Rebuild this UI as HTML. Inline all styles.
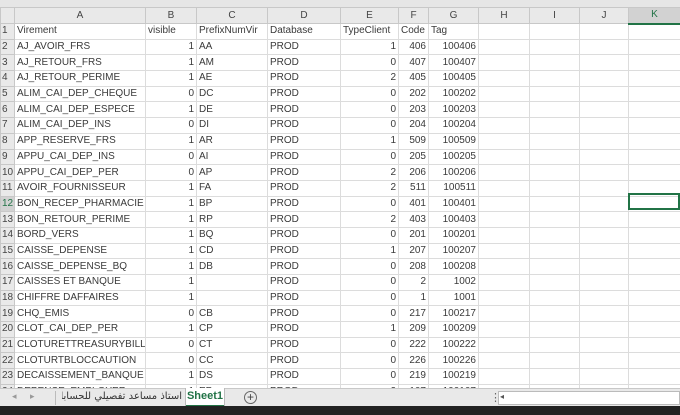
<!DOCTYPE html>
<html><head><meta charset="utf-8"><style>
*{margin:0;padding:0;box-sizing:border-box}
body{width:680px;height:415px;overflow:hidden;background:#fff;font-family:"Liberation Sans",Arial,sans-serif;font-size:10px;color:#3a3a3a;position:relative}
#top{position:absolute;left:0;top:0;width:680px;height:7px;background:#e6e6e6}
table{position:absolute;left:0;top:7px;border-collapse:collapse;table-layout:fixed;width:680px}
td{border:1px solid #dcdcdc;height:15.7px;padding:0 2px;white-space:nowrap;overflow:hidden;line-height:14px}
tr.h td{background:#e9e9e9;height:16px;text-align:center;color:#444;border-color:#c8c8c8}
td.n{background:#e9e9e9;color:#444;text-align:left;padding-left:1px;border-color:#c8c8c8}
td.r{text-align:right}
tr.h td.k{background:#d2d2d2;color:#217346;border-bottom:2px solid #217346}
td.n12{color:#217346;background:#d2d2d2}
#sel{position:absolute;left:628px;top:193px;width:52px;height:17px;border:2px solid #217346}
#tabs{position:absolute;left:0;top:388px;width:680px;height:18px;background:#e9e9e9;border-top:1px solid #c8c8c8;font-size:11px}
#blk{position:absolute;left:0;top:406px;width:680px;height:9px;background:#222}
</style></head><body>
<div id="top"></div>
<table>
<colgroup><col style="width:14px"><col style="width:131px"><col style="width:51px"><col style="width:71px"><col style="width:73px"><col style="width:58px"><col style="width:30px"><col style="width:50px"><col style="width:51px"><col style="width:50px"><col style="width:49px"><col style="width:52px"></colgroup>
<tr class="h"><td></td><td>A</td><td>B</td><td>C</td><td>D</td><td>E</td><td>F</td><td>G</td><td>H</td><td>I</td><td>J</td><td class="k">K</td></tr>
<tr><td class="n">1</td><td>Virement</td><td>visible</td><td>PrefixNumVir</td><td>Database</td><td>TypeClient</td><td>Code</td><td>Tag</td><td></td><td></td><td></td><td></td></tr>
<tr><td class="n">2</td><td>AJ_AVOIR_FRS</td><td class="r">1</td><td>AA</td><td>PROD</td><td class="r">1</td><td class="r">406</td><td class="r">100406</td><td></td><td></td><td></td><td></td></tr>
<tr><td class="n">3</td><td>AJ_RETOUR_FRS</td><td class="r">1</td><td>AM</td><td>PROD</td><td class="r">0</td><td class="r">407</td><td class="r">100407</td><td></td><td></td><td></td><td></td></tr>
<tr><td class="n">4</td><td>AJ_RETOUR_PERIME</td><td class="r">1</td><td>AE</td><td>PROD</td><td class="r">2</td><td class="r">405</td><td class="r">100405</td><td></td><td></td><td></td><td></td></tr>
<tr><td class="n">5</td><td>ALIM_CAI_DEP_CHEQUE</td><td class="r">0</td><td>DC</td><td>PROD</td><td class="r">0</td><td class="r">202</td><td class="r">100202</td><td></td><td></td><td></td><td></td></tr>
<tr><td class="n">6</td><td>ALIM_CAI_DEP_ESPECE</td><td class="r">1</td><td>DE</td><td>PROD</td><td class="r">0</td><td class="r">203</td><td class="r">100203</td><td></td><td></td><td></td><td></td></tr>
<tr><td class="n">7</td><td>ALIM_CAI_DEP_INS</td><td class="r">0</td><td>DI</td><td>PROD</td><td class="r">0</td><td class="r">204</td><td class="r">100204</td><td></td><td></td><td></td><td></td></tr>
<tr><td class="n">8</td><td>APP_RESERVE_FRS</td><td class="r">1</td><td>AR</td><td>PROD</td><td class="r">1</td><td class="r">509</td><td class="r">100509</td><td></td><td></td><td></td><td></td></tr>
<tr><td class="n">9</td><td>APPU_CAI_DEP_INS</td><td class="r">0</td><td>AI</td><td>PROD</td><td class="r">0</td><td class="r">205</td><td class="r">100205</td><td></td><td></td><td></td><td></td></tr>
<tr><td class="n">10</td><td>APPU_CAI_DEP_PER</td><td class="r">0</td><td>AP</td><td>PROD</td><td class="r">2</td><td class="r">206</td><td class="r">100206</td><td></td><td></td><td></td><td></td></tr>
<tr><td class="n">11</td><td>AVOIR_FOURNISSEUR</td><td class="r">1</td><td>FA</td><td>PROD</td><td class="r">2</td><td class="r">511</td><td class="r">100511</td><td></td><td></td><td></td><td></td></tr>
<tr><td class="n n12">12</td><td>BON_RECEP_PHARMACIE</td><td class="r">1</td><td>BP</td><td>PROD</td><td class="r">0</td><td class="r">401</td><td class="r">100401</td><td></td><td></td><td></td><td></td></tr>
<tr><td class="n">13</td><td>BON_RETOUR_PERIME</td><td class="r">1</td><td>RP</td><td>PROD</td><td class="r">2</td><td class="r">403</td><td class="r">100403</td><td></td><td></td><td></td><td></td></tr>
<tr><td class="n">14</td><td>BORD_VERS</td><td class="r">1</td><td>BQ</td><td>PROD</td><td class="r">0</td><td class="r">201</td><td class="r">100201</td><td></td><td></td><td></td><td></td></tr>
<tr><td class="n">15</td><td>CAISSE_DEPENSE</td><td class="r">1</td><td>CD</td><td>PROD</td><td class="r">1</td><td class="r">207</td><td class="r">100207</td><td></td><td></td><td></td><td></td></tr>
<tr><td class="n">16</td><td>CAISSE_DEPENSE_BQ</td><td class="r">1</td><td>DB</td><td>PROD</td><td class="r">0</td><td class="r">208</td><td class="r">100208</td><td></td><td></td><td></td><td></td></tr>
<tr><td class="n">17</td><td>CAISSES ET BANQUE</td><td class="r">1</td><td></td><td>PROD</td><td class="r">0</td><td class="r">2</td><td class="r">1002</td><td></td><td></td><td></td><td></td></tr>
<tr><td class="n">18</td><td>CHIFFRE DAFFAIRES</td><td class="r">1</td><td></td><td>PROD</td><td class="r">0</td><td class="r">1</td><td class="r">1001</td><td></td><td></td><td></td><td></td></tr>
<tr><td class="n">19</td><td>CHQ_EMIS</td><td class="r">0</td><td>CB</td><td>PROD</td><td class="r">0</td><td class="r">217</td><td class="r">100217</td><td></td><td></td><td></td><td></td></tr>
<tr><td class="n">20</td><td>CLOT_CAI_DEP_PER</td><td class="r">1</td><td>CP</td><td>PROD</td><td class="r">1</td><td class="r">209</td><td class="r">100209</td><td></td><td></td><td></td><td></td></tr>
<tr><td class="n">21</td><td>CLOTURETTREASURYBILL</td><td class="r">0</td><td>CT</td><td>PROD</td><td class="r">0</td><td class="r">222</td><td class="r">100222</td><td></td><td></td><td></td><td></td></tr>
<tr><td class="n">22</td><td>CLOTURTBLOCCAUTION</td><td class="r">0</td><td>CC</td><td>PROD</td><td class="r">0</td><td class="r">226</td><td class="r">100226</td><td></td><td></td><td></td><td></td></tr>
<tr><td class="n">23</td><td>DECAISSEMENT_BANQUE</td><td class="r">1</td><td>DS</td><td>PROD</td><td class="r">0</td><td class="r">219</td><td class="r">100219</td><td></td><td></td><td></td><td></td></tr>
<tr><td class="n">24</td><td>DEPENSE_EMPLOYER</td><td class="r">1</td><td>EP</td><td>PROD</td><td class="r">2</td><td class="r">107</td><td class="r">100107</td><td></td><td></td><td></td><td></td></tr>
</table>
<div id="sel"></div>
<div id="tabs">
<span style="position:absolute;left:12px;top:2px;color:#999;font-size:9px">◂</span>
<span style="position:absolute;left:30px;top:2px;color:#999;font-size:9px">▸</span>
<span style="position:absolute;left:55px;top:2px;width:1px;height:14px;background:#bbb"></span>
<span style="position:absolute;left:62px;top:2px;width:120px;text-align:center;color:#333;white-space:nowrap;overflow:hidden;font-family:'DejaVu Sans',sans-serif;font-size:10px" dir="rtl">استاذ مساعد تفصيلي للحسابات الت</span>
<span style="position:absolute;left:185px;top:-1px;width:1px;height:18px;background:#bbb"></span>
<span style="position:absolute;left:186px;top:-1px;width:38px;height:19px;background:#fff;border-bottom:2px solid #217346;color:#217346;font-weight:bold;text-align:center;line-height:17px;font-size:11px">Sheet1</span>
<span style="position:absolute;left:224px;top:-1px;width:1px;height:18px;background:#bbb"></span>
<span style="position:absolute;left:244px;top:2px;width:13px;height:13px;border:1px solid #666;border-radius:50%;text-align:center;line-height:11px;font-size:12px;color:#444">+</span>
<span style="position:absolute;left:490px;top:2px;color:#666">⋮</span>
<span style="position:absolute;left:498px;top:2px;width:182px;height:14px;background:#fff;border:1px solid #bbb"></span>
<span style="position:absolute;left:500px;top:3px;font-size:8px;color:#555">◂</span>
</div>
<div id="blk"></div>
</body></html>
